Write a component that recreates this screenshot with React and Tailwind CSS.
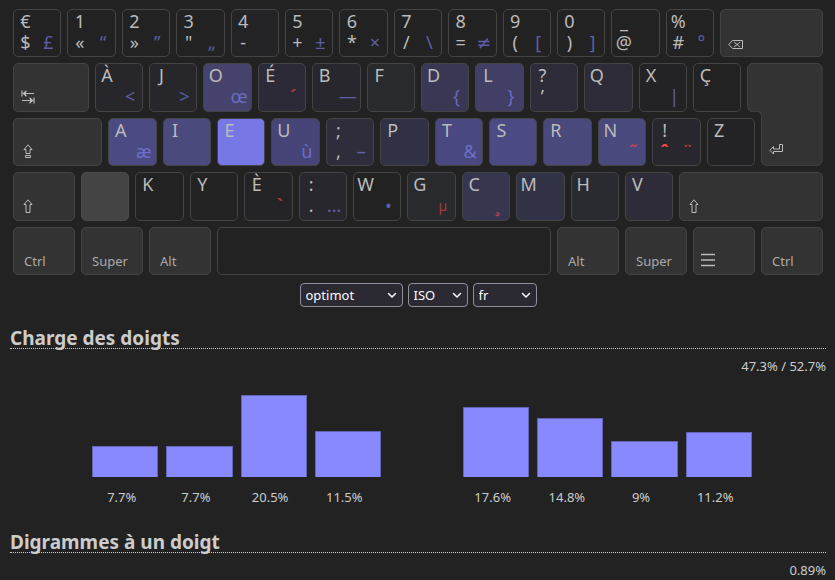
import React from "react";

// Each key: [upper, lower, altgr, background, dead-key level ("altgr" | "base")]
const rows = {
  digits: [
    ["€", "$", "£", "#222222"],
    ["1", "«", "“", "#222223"],
    ["2", "»", "”", "#222223"],
    ["3", '"', "„", "#222223"],
    ["4", "-", "", "#242426"],
    ["5", "+", "±", "#222222"],
    ["6", "*", "×", "#222222"],
    ["7", "/", "\\", "#222222"],
    ["8", "=", "≠", "#222222"],
    ["9", "(", "[", "#222222"],
    ["0", ")", "]", "#222222"],
    ["_", "@", "", "#222222"],
    ["%", "#", "°", "#222222"],
  ],
  top: [
    ["À", "", "<", "#26262b"],
    ["J", "", ">", "#26262b"],
    ["O", "", "œ", "#45436c"],
    ["É", "", "´", "#2b2a36", "altgr"],
    ["B", "", "—", "#28272d"],
    ["F", "", "", "#292a2e"],
    ["D", "", "{", "#393754"],
    ["L", "", "}", "#413f65"],
    ["?", "’", "", "#2c2b37"],
    ["Q", "", "", "#2c2b37"],
    ["X", "", "|", "#232325"],
    ["Ç", "", "", "#222222"],
  ],
  home: [
    ["A", "", "æ", "#4b4a82"],
    ["I", "", "", "#4a4a7c"],
    ["E", "", "", "#7777e5"],
    ["U", "", "ù", "#474577"],
    [";", ",", "–", "#2f2d3c"],
    ["P", "", "", "#303145"],
    ["T", "", "&", "#4a4880"],
    ["S", "", "", "#4b4a84"],
    ["R", "", "", "#4a497c"],
    ["N", "", "˜", "#4a497e", "altgr"],
    ["!", "ˆ", "¨", "#28272d", "base"],
    ["Z", "", "", "#232325"],
  ],
  bottom: [
    ["K", "", "", "#222222"],
    ["Y", "", "", "#232324"],
    ["È", "", "`", "#242426", "altgr"],
    [":", ".", "…", "#28272d"],
    ["W", "", "•", "#222222"],
    ["G", "", "µ", "#292a2d", "greek"],
    ["C", "", "¸", "#373650", "altgr"],
    ["M", "", "", "#323246"],
    ["H", "", "", "#2a2a31"],
    ["V", "", "", "#2d2c38"],
  ],
};

const stroke = {
  fill: "none",
  stroke: "currentColor",
  strokeWidth: 1,
  "aria-hidden": true,
};

const TabIcon = () => (
  <svg {...stroke} strokeWidth="1.200" className="block" width="14" height="14" viewBox="0 0 14 14">
    <path d="M1 .5v6M2 3.500h11M5.500.8 2.500 3.500l3 2.700M1 10.500h11M13 7.500v6M8.500 7.800l3 2.700-3 2.700" />
    <path d="M2 3.500 5 1.200v4.600zM12 10.500 9 8.200v4.600z" fill="currentColor" stroke="none" />
  </svg>
);

const CapsIcon = () => (
  <svg {...stroke} className="block" width="14" height="14" viewBox="0 0 14 14">
    <path d="M7 .8 3 5.500h2v4h4v-4h2zM4.500 11.500h5v2h-5z" />
  </svg>
);

const ShiftIcon = () => (
  <svg {...stroke} className="block" width="14" height="14" viewBox="0 0 14 14">
    <path d="M7 .8 3 5.500h2v8h4v-8h2z" />
  </svg>
);

const BackspaceIcon = () => (
  <svg {...stroke} className="block" width="15" height="9" viewBox="0 0 15 9">
    <path d="M.7 4.500 4.500.5h10v8h-10zM6 2l6 5M12 2 6 7" />
  </svg>
);

const EnterIcon = () => (
  <svg {...stroke} className="block" width="14" height="12" viewBox="0 0 14 12">
    <path d="M10.500.5h3v7h-9V10L.8 6.300 4.500 2.500V5h6z" />
  </svg>
);

const MenuIcon = () => (
  <svg {...stroke} strokeWidth="1.500" className="block" width="14" height="14" viewBox="0 0 14 14">
    <path d="M0 1.500h14M0 7h14M0 12.500h14" />
  </svg>
);

const altStyles = {
  altgr: "font-bold text-[#ff4444]/60",
  base: "font-bold text-[#ff4444]/60",
  greek: "text-[14px] text-[#ff4444]/60",
};

function CharKey({ data }) {
  const [upper, lower, altgr, background, dead] = data;
  const baseStyle = dead === "base" ? "font-bold text-[#ff4444]" : "";
  const altStyle = altStyles[dead] ?? "text-[#8888ff]/60";
  const symbolFont = altgr === "≠" ? "font-['DejaVu_Sans',sans-serif]" : "";
  return (
    <div className="col-span-4 p-[3px]">
      <button
        type="button"
        style={{ backgroundColor: background }}
        className="grid h-full w-full grid-cols-[23px_23px] grid-rows-[21px_21px] overflow-hidden rounded-[5px] border border-[#444] pt-[1px] text-center text-[18px] leading-[21px] text-[#bbb]"
      >
        <span>{upper}</span>
        <span />
        <span className={baseStyle}>{lower}</span>
        <span className={`leading-[21px] ${altStyle} ${symbolFont}`}>{altgr}</span>
      </button>
    </div>
  );
}

function ModKey({ span, label, icon, children }) {
  return (
    <div className={`${span} p-[3px]`}>
      <button
        type="button"
        aria-label={label}
        className={`flex h-full w-full items-end rounded-[5px] border border-[#444] bg-[#333] text-[13px] leading-[16px] ${
          icon ? "px-[7px] pb-[7px] text-[#bbb]" : "px-[10px] pb-[5px] text-[#aaa]"
        }`}
      >
        {icon ?? children}
      </button>
    </div>
  );
}

function EnterKey() {
  return (
    <div className="col-span-5 col-start-56 row-span-2 p-[3px]">
      <button
        type="button"
        aria-label="Entrée"
        className="relative flex h-full w-full items-end px-[8px] pb-[10px] text-[#bbb]"
      >
        <svg
          className="absolute top-0 right-0 h-full w-[122%]"
          viewBox="0 0 76 103"
          preserveAspectRatio="none"
          aria-hidden="true"
        >
          <path
            d="M5.500.5h65a5 5 0 0 1 5 5v92a5 5 0 0 1-5 5h-51a5 5 0 0 1-5-5v-45a4 4 0 0 0-4-4h-5a5 5 0 0 1-5-5v-38a5 5 0 0 1 5-5z"
            fill="#333"
            stroke="#444"
          />
        </svg>
        <span className="relative">
          <EnterIcon />
        </span>
      </button>
    </div>
  );
}

const keysOf = (row) => row.map((data) => <CharKey key={data[0]} data={data} />);

function Keyboard() {
  return (
    <section
      aria-label="Clavier"
      className="grid aspect-[3/1] w-full grid-cols-60 grid-rows-5"
    >
      {keysOf(rows.digits)}
      <ModKey span="col-span-8" label="Retour arrière" icon={<BackspaceIcon />} />

      <ModKey span="col-span-6" label="Tabulation" icon={<TabIcon />} />
      {keysOf(rows.top)}
      <EnterKey />

      <ModKey span="col-span-7" label="Verrouillage majuscule" icon={<CapsIcon />} />
      {keysOf(rows.home)}

      <ModKey span="col-span-5" label="Majuscule gauche" icon={<ShiftIcon />} />
      <div className="col-span-4 p-[3px]">
        <button
          type="button"
          aria-label="Touche ISO"
          className="block h-full w-full rounded-[5px] border border-[#4c4c4c] bg-[#444]"
        />
      </div>
      {keysOf(rows.bottom)}
      <ModKey span="col-span-11" label="Majuscule droite" icon={<ShiftIcon />} />

      <ModKey span="col-span-5">Ctrl</ModKey>
      <ModKey span="col-span-5">Super</ModKey>
      <ModKey span="col-span-5">Alt</ModKey>
      <div className="col-span-25 p-[3px]">
        <button
          type="button"
          aria-label="Espace"
          className="block h-full w-full rounded-[5px] border border-[#444]"
        />
      </div>
      <ModKey span="col-span-5">Alt</ModKey>
      <ModKey span="col-span-5">Super</ModKey>
      <ModKey span="col-span-5" label="Menu" icon={<MenuIcon />} />
      <ModKey span="col-span-5">Ctrl</ModKey>
    </section>
  );
}

function Select({ label, width, options }) {
  return (
    <div className={`relative ${width}`}>
      <select
        aria-label={label}
        className="block h-[24px] w-full appearance-none rounded-[4px] border border-[#8f8f9d] bg-[#2b2a33] px-[5px] text-[13px] leading-[18px] text-[#fbfbfe]"
      >
        {options.map((option) => (
          <option key={option}>{option}</option>
        ))}
      </select>
      <svg
        className="pointer-events-none absolute top-[9px] right-[6px]"
        width="10"
        height="7"
        viewBox="0 0 10 7"
        fill="none"
        stroke="#fbfbfe"
        strokeWidth="1.500"
        strokeLinecap="round"
        strokeLinejoin="round"
        aria-hidden="true"
      >
        <path d="m1.500 1.500 3.500 3.500 3.500-3.500" />
      </svg>
    </div>
  );
}

const hands = [
  { name: "gauche", start: "col-start-2", loads: [7.7, 7.7, 20.5, 11.5] },
  { name: "droite", start: "col-start-7", loads: [17.6, 14.8, 9, 11.2] },
];

function LoadChart() {
  return (
    <div className="grid grid-cols-11">
      {hands.map((hand) => (
        <ul
          key={hand.name}
          aria-label={`Main ${hand.name}`}
          className={`${hand.start} col-span-4 grid grid-cols-4`}
        >
          {hand.loads.map((load, finger) => (
            <li key={finger} className="text-center">
              <div className="flex h-[102px] items-end pl-[8px]">
                <div
                  className="w-full border-x border-t border-[#6464b4] bg-[#8888ff]"
                  style={{ height: `${Math.round(load * 4)}px` }}
                />
              </div>
              <div className="mt-[11px] pl-[1px]">{load}%</div>
            </li>
          ))}
        </ul>
      ))}
    </div>
  );
}

function Heading({ children }) {
  return (
    <h3 className="border-b border-dotted border-[#ccc] pt-[2px] text-[19px] leading-[20px] font-bold">
      {children}
    </h3>
  );
}

export default function App() {
  return (
    <main className="min-h-screen bg-[#222] pt-[6px] pr-[9px] pl-[10px] font-['Noto_Sans',sans-serif] text-[13px] leading-[18px] text-[#ccc]">
      <Keyboard />
      <form className="mt-[5px] flex justify-center gap-[5px]">
        <Select label="Disposition" width="w-[103px]" options={["optimot", "bépo", "azerty"]} />
        <Select label="Géométrie" width="w-[60px]" options={["ISO", "ANSI"]} />
        <Select label="Corpus" width="w-[64px]" options={["fr", "en"]} />
      </form>
      <section className="mt-[19px]">
        <Heading>Charge des doigts</Heading>
        <p className="mt-[8px] text-right">47.3% / 52.7%</p>
        <LoadChart />
      </section>
      <section className="mt-[24px]">
        <Heading>Digrammes à un doigt</Heading>
        <p className="mt-[8px] text-right">0.89%</p>
      </section>
    </main>
  );
}
